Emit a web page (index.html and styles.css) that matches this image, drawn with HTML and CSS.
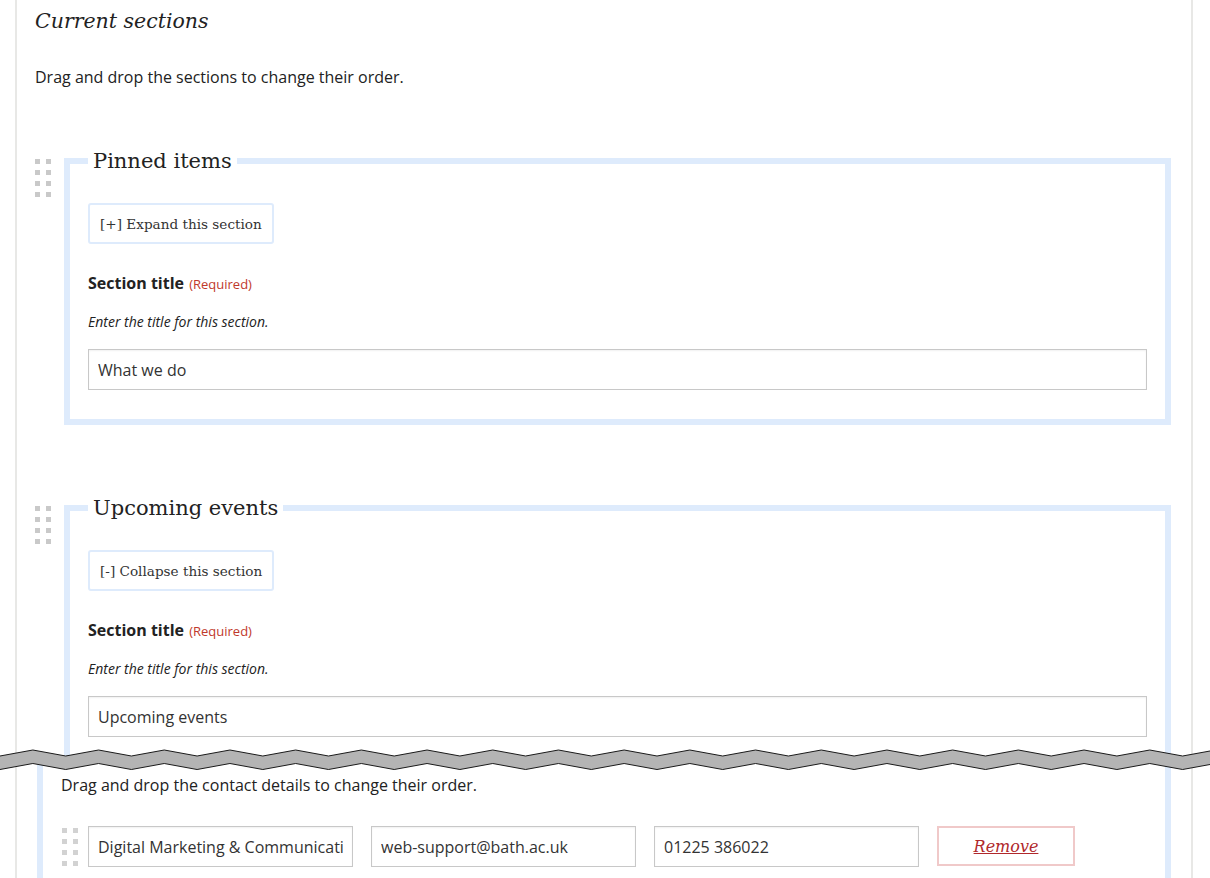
FILE: index.html
```html
<!DOCTYPE html>
<html lang="en">
<head>
<meta charset="utf-8">
<title>Current sections</title>
<link rel="stylesheet" href="styles.css">
</head>
<body>
<div class="page">
  <div class="clip-top">
    <h2 class="page-title">Current sections</h2>
    <p class="intro">Drag and drop the sections to change their order.</p>

    <div class="section-row">
      <div class="handle"><i></i><i></i><i></i><i></i><i></i><i></i><i></i><i></i></div>
      <fieldset class="section">
        <legend>Pinned items</legend>
        <button class="toggle" type="button">[+] Expand this section</button>
        <div class="label">Section title <span class="req">(Required)</span></div>
        <div class="hint">Enter the title for this section.</div>
        <input class="field" type="text" value="What we do">
      </fieldset>
    </div>

    <div class="section-row second">
      <div class="handle"><i></i><i></i><i></i><i></i><i></i><i></i><i></i><i></i></div>
      <fieldset class="section">
        <legend>Upcoming events</legend>
        <button class="toggle" type="button">[-] Collapse this section</button>
        <div class="label">Section title <span class="req">(Required)</span></div>
        <div class="hint">Enter the title for this section.</div>
        <input class="field" type="text" value="Upcoming events">
      </fieldset>
    </div>
  </div>

  <div class="clip-bottom">
    <div class="contacts">
      <p class="contacts-intro">Drag and drop the contact details to change their order.</p>
      <div class="contact-row">
        <div class="handle small"><i></i><i></i><i></i><i></i><i></i><i></i><i></i><i></i></div>
        <input class="cfield" type="text" value="Digital Marketing &amp; Communications">
        <input class="cfield" type="text" value="web-support@bath.ac.uk">
        <input class="cfield" type="text" value="01225 386022">
        <button class="remove" type="button">Remove</button>
      </div>
    </div>
  </div>
</div>

<svg class="tear" width="1210" height="32" viewBox="0 0 1210 32" aria-hidden="true">
  <polygon fill="#b4b4b4" points="0,12 32.85,6 65.7,12 98.55,6 131.4,12 164.25,6 197.1,12 229.95,6 262.8,12 295.65,6 328.5,12 361.35,6 394.2,12 427.05,6 459.9,12 492.75,6 525.6,12 558.45,6 591.3,12 624.15,6 657,12 689.85,6 722.7,12 755.55,6 788.4,12 821.25,6 854.1,12 886.95,6 919.8,12 952.65,6 985.5,12 1018.35,6 1051.2,12 1084.05,6 1116.9,12 1149.75,6 1182.6,12 1215.45,6 1248.3,12 1248.3,25.5 1215.45,19.5 1182.6,25.5 1149.75,19.5 1116.9,25.5 1084.05,19.5 1051.2,25.5 1018.35,19.5 985.5,25.5 952.65,19.5 919.8,25.5 886.95,19.5 854.1,25.5 821.25,19.5 788.4,25.5 755.55,19.5 722.7,25.5 689.85,19.5 657,25.5 624.15,19.5 591.3,25.5 558.45,19.5 525.6,25.5 492.75,19.5 459.9,25.5 427.05,19.5 394.2,25.5 361.35,19.5 328.5,25.5 295.65,19.5 262.8,25.5 229.95,19.5 197.1,25.5 164.25,19.5 131.4,25.5 98.55,19.5 65.7,25.5 32.85,19.5 0,25.5"/>
  <polyline fill="none" stroke="#1a1a1a" stroke-width="1" points="0,12 32.85,6 65.7,12 98.55,6 131.4,12 164.25,6 197.1,12 229.95,6 262.8,12 295.65,6 328.5,12 361.35,6 394.2,12 427.05,6 459.9,12 492.75,6 525.6,12 558.45,6 591.3,12 624.15,6 657,12 689.85,6 722.7,12 755.55,6 788.4,12 821.25,6 854.1,12 886.95,6 919.8,12 952.65,6 985.5,12 1018.35,6 1051.2,12 1084.05,6 1116.9,12 1149.75,6 1182.6,12 1215.45,6 1248.3,12"/>
  <polyline fill="none" stroke="#1a1a1a" stroke-width="1" points="0,25.5 32.85,19.5 65.7,25.5 98.55,19.5 131.4,25.5 164.25,19.5 197.1,25.5 229.95,19.5 262.8,25.5 295.65,19.5 328.5,25.5 361.35,19.5 394.2,25.5 427.05,19.5 459.9,25.5 492.75,19.5 525.6,25.5 558.45,19.5 591.3,25.5 624.15,19.5 657,25.5 689.85,19.5 722.7,25.5 755.55,19.5 788.4,25.5 821.25,19.5 854.1,25.5 886.95,19.5 919.8,25.5 952.65,19.5 985.5,25.5 1018.35,19.5 1051.2,25.5 1084.05,19.5 1116.9,25.5 1149.75,19.5 1182.6,25.5 1215.45,19.5 1248.3,25.5"/>
</svg>
</body>
</html>
```

FILE: styles.css
```css
html, body {
  margin: 0;
  padding: 0;
  background: #fff;
}
body {
  position: relative;
  font-family: "Open Sans", "Liberation Sans", sans-serif;
  color: #222;
  overflow: hidden;
  height: 878px;
}

.page {
  margin-left: 15px;
  width: 1136px;
  border-left: 2px solid #e8e8e6;
  border-right: 2px solid #e8e8e6;
  padding: 0 20px 0 18px;
  height: 878px;
}

.clip-top {
  height: 760px;
  overflow: hidden;
}

.page-title {
  margin: 6px 0 0;
  font-family: "DejaVu Serif", serif;
  font-style: italic;
  font-weight: normal;
  font-size: 20.5px;
  line-height: 30px;
  color: #222;
}

.intro {
  margin: 30px 0 0;
  font-size: 16px;
  line-height: 22px;
}

.section-row {
  display: flex;
  align-items: flex-start;
  gap: 13px;
  margin-top: 58px;
}
.section-row.second {
  margin-top: 68px;
}

.handle {
  flex: none;
  display: grid;
  grid-template-columns: 5px 5px;
  grid-auto-rows: 5px;
  gap: 6px;
  margin-top: 13px;
}
.handle i {
  display: block;
  background: #c9c9c9;
}

.section {
  flex: 1;
  min-width: 0;
  margin: 0;
  border: 6px solid #deebfc;
  padding: 27px 18px 29px;
}
.section legend {
  padding: 0 5px;
  font-family: "DejaVu Serif", serif;
  font-size: 21px;
  line-height: 30px;
  color: #222;
}

.toggle {
  display: block;
  height: 41px;
  margin: 0;
  padding: 0 10px;
  background: #fff;
  border: 2px solid #deebfc;
  border-radius: 3px;
  font-family: "DejaVu Serif", serif;
  font-size: 13.6px;
  color: #333;
}

.label {
  margin-top: 27px;
  font-weight: 700;
  font-size: 16px;
  line-height: 24px;
  color: #222;
}
.req {
  margin-left: 1px;
  font-weight: 400;
  font-size: 13px;
  color: #c0392b;
}

.hint {
  margin-top: 16px;
  font-style: italic;
  font-size: 14px;
  line-height: 20px;
  color: #222;
}

.field {
  display: block;
  box-sizing: border-box;
  width: 100%;
  height: 41px;
  margin-top: 17px;
  padding: 0 9px;
  border: 1px solid #c8c8c8;
  box-shadow: inset 0 1px 2px rgba(0, 0, 0, 0.06);
  font-family: "Open Sans", "Liberation Sans", sans-serif;
  font-size: 16px;
  color: #333;
  background: #fff;
}

.clip-bottom {
  height: 118px;
  overflow: hidden;
}

.contacts {
  margin-left: 2px;
  border-left: 6px solid #deebfc;
  border-right: 6px solid #deebfc;
  padding: 14px 18px 0;
  height: 118px;
  box-sizing: border-box;
}

.contacts-intro {
  margin: 0;
  font-size: 16px;
  line-height: 22px;
}

.contact-row {
  display: flex;
  align-items: flex-start;
  margin-top: 30px;
}
.handle.small {
  margin: 2px 10px 0 1px;
}
.handle.small i {
  background: #d2d2d2;
}

.cfield {
  flex: none;
  box-sizing: border-box;
  width: 265px;
  height: 41px;
  margin: 0 18px 0 0;
  padding: 0 9px;
  border: 1px solid #c8c8c8;
  box-shadow: inset 0 1px 2px rgba(0, 0, 0, 0.06);
  font-family: "Open Sans", "Liberation Sans", sans-serif;
  font-size: 16px;
  color: #333;
  background: #fff;
}

.remove {
  flex: none;
  box-sizing: border-box;
  width: 138px;
  height: 40px;
  margin: 0;
  padding: 0;
  background: #fff;
  border: 2px solid #f0c9c9;
  font-family: "DejaVu Serif", serif;
  font-style: italic;
  font-size: 16px;
  color: #b0282b;
  text-decoration: underline;
}

.tear {
  position: absolute;
  left: 0;
  top: 744px;
  display: block;
}
```
